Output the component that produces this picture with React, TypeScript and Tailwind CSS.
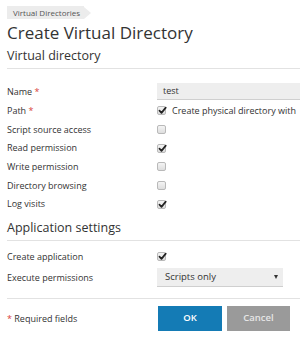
import React from "react";

const Check = ({ checked }: { checked?: boolean }) => (
  <span className="relative inline-block w-[9px] h-[9px] rounded-[2px] border border-[#b9b9b9] bg-gradient-to-b from-[#f4f4f4] to-[#dedede] shrink-0">
    {checked && (
      <svg viewBox="0 0 10 10" className="absolute left-[0px] top-[-1px] w-[9px] h-[9px]">
        <path d="M1.6 5.2 L3.9 7.6 L8.6 1.8" fill="none" stroke="#222" strokeWidth="1.9" strokeLinecap="round" strokeLinejoin="round" />
      </svg>
    )}
  </span>
);

const Req = () => <span className="text-[#d9413a]"> *</span>;

const Row = ({ label, req, children }: { label: string; req?: boolean; children?: React.ReactNode }) => (
  <div className="flex items-center h-[18.67px]">
    <div className="w-[150px] shrink-0 text-[9px] text-[#333]">
      {label}
      {req && <Req />}
    </div>
    <div className="flex items-center min-w-0">{children}</div>
  </div>
);

export default function App() {
  return (
    <div
      className="w-[300px] h-[338px] overflow-hidden bg-white text-[#333]"
      style={{ fontFamily: '"Open Sans", "Liberation Sans", sans-serif' }}
    >
      <div className="w-[300px] pl-[7px] pt-[6px]">
        {/* breadcrumb */}
        <div className="flex items-center h-[13px]">
          <span className="h-[13px] flex items-center bg-[#ececec] pl-[6px] pr-[4px] text-[8px] text-[#555]">
            Virtual Directories
          </span>
          <span className="w-0 h-0 border-t-[6.5px] border-b-[6.5px] border-l-[7px] border-t-transparent border-b-transparent border-l-[#ececec]" />
        </div>
        {/* title */}
        <div className="mt-[2.5px] text-[17px] leading-[22px] text-[#333]">Create Virtual Directory</div>

        {/* section 1 */}
        <div className="mt-[4px] text-[12.5px] leading-[16px] text-[#333] pb-[4px] border-b border-[#e2e2e2]">
          Virtual directory
        </div>

        <div className="mt-[13px] flex items-center h-[20px]">
          <div className="w-[150px] shrink-0 text-[9px]">
            Name<Req />
          </div>
          <div className="w-[143px] shrink-0 h-[17px] bg-[#eeeeee] border-b border-[#cfcfcf] flex items-center pl-[6px] text-[9px]">
            test
          </div>
        </div>
        <Row label="Path" req>
          <Check checked />
          <span className="ml-[6px] text-[9px] whitespace-nowrap">Create physical directory with</span>
        </Row>
        <Row label="Script source access">
          <Check />
        </Row>
        <Row label="Read permission">
          <Check checked />
        </Row>
        <Row label="Write permission">
          <Check />
        </Row>
        <Row label="Directory browsing">
          <Check />
        </Row>
        <Row label="Log visits">
          <Check checked />
        </Row>

        {/* section 2 */}
        <div className="mt-[7px] text-[12.5px] leading-[16px] text-[#333] pb-[4px] border-b border-[#e2e2e2]">
          Application settings
        </div>
        <div className="mt-[6px]">
          <Row label="Create application">
            <Check checked />
          </Row>
        </div>
        <div className="flex items-center h-[23px]">
          <div className="w-[150px] shrink-0 text-[9px]">Execute permissions</div>
          <div className="w-[126px] h-[19px] bg-[#eeeeee] border-b border-[#cfcfcf] flex items-center justify-between pl-[8px] pr-[5px] text-[9.5px]">
            <span>Scripts only</span>
            <span className="w-0 h-0 border-l-[2.5px] border-r-[2.5px] border-t-[4px] border-l-transparent border-r-transparent border-t-[#333]" />
          </div>
        </div>

        {/* footer */}
        <div className="mt-[9px] border-t border-[#e2e2e2] flex items-center pt-[7px]">
          <div className="w-[151px] shrink-0 text-[9px]">
            <span className="text-[#d9413a]">*</span> Required fields
          </div>
          <button className="w-[64px] h-[25px] bg-[#147bb5] text-white text-[9.5px] font-semibold">OK</button>
          <button className="ml-[5px] w-[63px] h-[25px] bg-[#9a9a9a] text-[#e6e6e6] text-[9.5px] font-semibold">Cancel</button>
        </div>
      </div>
    </div>
  );
}
